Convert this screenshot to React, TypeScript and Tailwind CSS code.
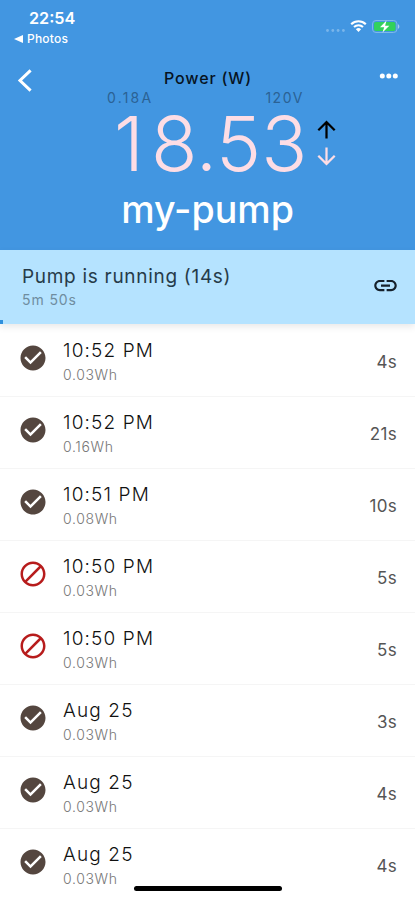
import React from 'react';
import { MdArrowDownward, MdArrowUpward, MdCheckCircle, MdDoNotDisturb, MdLink } from 'react-icons/md';

interface PumpEvent {
  time: string;
  energy: string;
  duration: string;
  ok: boolean;
}

const events: PumpEvent[] = [
  { time: '10:52 PM', energy: '0.03Wh', duration: '4s', ok: true },
  { time: '10:52 PM', energy: '0.16Wh', duration: '21s', ok: true },
  { time: '10:51 PM', energy: '0.08Wh', duration: '10s', ok: true },
  { time: '10:50 PM', energy: '0.03Wh', duration: '5s', ok: false },
  { time: '10:50 PM', energy: '0.03Wh', duration: '5s', ok: false },
  { time: 'Aug 25', energy: '0.03Wh', duration: '3s', ok: true },
  { time: 'Aug 25', energy: '0.03Wh', duration: '4s', ok: true },
  { time: 'Aug 25', energy: '0.03Wh', duration: '4s', ok: true },
];

const StatusBar: React.FC = () => (
  <div className="flex h-12 justify-between pl-3.5 pr-[15px] text-white">
    <div className="pt-2">
      <div className="pl-[15px] text-[16.2px] leading-5 font-semibold">22:54</div>
      <div className="flex items-center text-[12px] leading-[21px] font-medium">
        <svg className="mr-1 h-2 w-[9px]" viewBox="0 0 9 8" fill="currentColor">
          <path d="M0 4 9 0v8z" />
        </svg>
        <span className="tracking-[0.2px]">Photos</span>
      </div>
    </div>
    <div className="mt-[18px] flex h-4 items-center">
      {/* No signal */}
      <svg className="mt-2 h-[3px] w-[19px]" viewBox="0 0 19 3" fill="#7ab5ea">
        <circle cx="1.5" cy="1.5" r="1.4" />
        <circle cx="6.8" cy="1.5" r="1.4" />
        <circle cx="12.1" cy="1.5" r="1.4" />
        <circle cx="17.4" cy="1.5" r="1.4" />
      </svg>
      <svg className="ml-[5px] h-3 w-[17px]" viewBox="0 0 17 12" fill="none" stroke="white">
        <path d="M1.2 4.2a10.5 10.5 0 0 1 14.6 0" strokeWidth="2.2" />
        <path d="M4 7a6.5 6.5 0 0 1 9 0" strokeWidth="2" />
        <path d="M8.5 12 5.9 9.3a3.8 3.8 0 0 1 5.2 0z" fill="white" stroke="none" />
      </svg>
      <svg className="ml-[5px] h-[13px] w-[28px]" viewBox="0 0 28 13">
        <rect x="0.5" y="0.5" width="24.5" height="12" rx="3.5" fill="none" stroke="#7fb8ea" />
        <rect x="2" y="2" width="21.5" height="9" rx="2" fill="#32d15b" />
        <path d="M26 4.2c1.8.7 1.8 3.9 0 4.6z" fill="#a5cdf2" />
        <path d="M14.5.5 8 7.2h4.2l-1.7 5.3L17.3 5.8h-4.2z" fill="white" />
      </svg>
    </div>
  </div>
);

const Header: React.FC = () => (
  <header className="h-[250px] shrink-0 bg-[#4296e1]">
    <StatusBar />
    <div className="flex h-[42px] justify-between px-[17px] text-white">
      <svg className="mt-[21px] h-[23px] w-[15px]" viewBox="0 0 15 23" fill="none" stroke="currentColor" strokeWidth="3">
        <path d="M13.6 1.4 3 11.5l10.6 10.1" />
      </svg>
      <div className="pt-5 pl-[5px] text-[16px] leading-5 font-medium tracking-[0.85px] text-[#07131f]">Power (W)</div>
      <svg className="mt-[25px] h-[6px] w-[19px]" viewBox="0 0 19 6" fill="currentColor">
        <circle cx="3.3" cy="3" r="2.5" />
        <circle cx="9.8" cy="3" r="2.5" />
        <circle cx="16.3" cy="3" r="2.5" />
      </svg>
    </div>
    <div className="flex h-4 justify-between pl-[107px] pr-[111px] text-[14px] leading-4 text-[#2b6294]">
      <span className="tracking-[2.2px]">0.18A</span>
      <span className="tracking-[1.5px]">120V</span>
    </div>
    <div className="flex h-[74px] items-center pl-[114px]">
      <span className="w-[199px] text-[76px] leading-[74px] font-light text-[#fddde5]">
        <span className="tracking-[7px]">1</span>8.53
      </span>
      <div className="flex flex-col">
        <MdArrowUpward className="size-[27px] text-black" />
        <MdArrowDownward className="size-[27px] text-[#fddde5]" />
      </div>
    </div>
    <h1 className="text-center text-[37.6px] leading-[60px] font-medium text-white">my-pump</h1>
  </header>
);

const RunningBanner: React.FC = () => (
  <section className="relative z-10 flex h-[74px] shrink-0 justify-between bg-[#b5e3ff] pr-4 pl-[22px] shadow-[0_3px_7px_rgba(0,0,0,0.09)]">
    <div className="pt-[15px]">
      <div className="text-[19px] leading-6 tracking-[0.7px] text-[#263b49]">Pump is running (14s)</div>
      <div className="text-[14px] leading-[22px] tracking-[0.9px] text-[#6f8d9f]">5m 50s</div>
    </div>
    <MdLink className="mt-[22px] size-[27px] text-[#15202b]" />
    {/* Progress of the current run */}
    <div className="absolute bottom-0 left-0 h-1 w-[3px] bg-[#2f8fdc]" />
  </section>
);

const EventRow: React.FC<{ event: PumpEvent }> = ({ event }) => (
  <li className="flex h-[72px] border-b border-[#f5f5f5] px-[18px]">
    {event.ok ? (
      <MdCheckCircle className="mt-[18px] size-[30px] shrink-0 text-[#54463f]" />
    ) : (
      <MdDoNotDisturb className="mt-[18px] size-[30px] shrink-0 -scale-x-100 text-[#b71c1c]" />
    )}
    <div className="flex-1 pt-3.5 pl-[15px]">
      <div className="text-[19px] leading-6 font-light tracking-[1.15px] text-[#111]">{event.time}</div>
      <div className="text-[14px] leading-6 font-light tracking-[0.65px] text-[#777]">{event.energy}</div>
    </div>
    <div className="pt-[25px] text-[17px] leading-6 tracking-[0.3px] text-[#555]">{event.duration}</div>
  </li>
);

const App: React.FC = () => {
  return (
    <div className="relative flex h-[900px] w-full flex-col overflow-hidden bg-white font-['Inter',sans-serif]">
      <Header />
      <RunningBanner />
      <ul className="pt-px">
        {events.map((event, index) => (
          <EventRow key={index} event={event} />
        ))}
      </ul>
      {/* Home indicator */}
      <div className="absolute bottom-[9px] left-[134px] h-[5px] w-[148px] rounded-full bg-black" />
    </div>
  );
};

export default App;
